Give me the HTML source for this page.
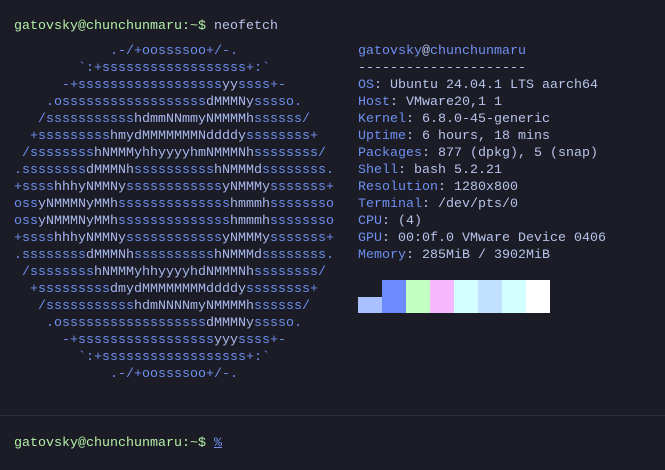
<!DOCTYPE html>
<html><head><meta charset="utf-8"><style>
html,body{margin:0;padding:0;background:#1b1c25;width:665px;height:470px;overflow:hidden}
.t{position:absolute;left:14px;font-family:"Liberation Mono",monospace;font-size:13.33px;line-height:17px;white-space:pre;color:#c0caf5}
.g{color:#b4f0a8}
.b{color:#6f8ff0}
.w{color:#a9b8f0}
.k{color:#6f8ff0}
.v{color:#b8c3ec}
.sep{position:absolute;left:0;top:415px;width:665px;height:1px;background:#2a2d3d}
.blk{position:absolute;top:280px;width:24px;height:33px}
</style></head><body>
<div class="t" style="top:18px"><span class="g">gatovsky@chunchunmaru:~$</span> <span class="v">neofetch</span></div>
<div class="t b" id="logo" style="top:43px">            .-/+oossssoo+/-.
        `:+ssssssssssssssssss+:`
      -+ssssssssssssssssssyyssss+-
    .ossssssssssssssssssdMMMNysssso.
   /ssssssssssshdmmNNmmyNMMMMhssssss/
  +ssssssssshmydMMMMMMMNddddyssssssss+
 /sssssssshNMMMyhhyyyyhmNMMMNhssssssss/
.ssssssssdMMMNhsssssssssshNMMMdssssssss.
+sssshhhyNMMNyssssssssssssyNMMMysssssss+
ossyNMMMNyMMhsssssssssssssshmmmhssssssso
ossyNMMMNyMMhsssssssssssssshmmmhssssssso
+sssshhhyNMMNyssssssssssssyNMMMysssssss+
.ssssssssdMMMNhsssssssssshNMMMdssssssss.
 /sssssssshNMMMyhhyyyyhdNMMMNhssssssss/
  +sssssssssdmydMMMMMMMMddddyssssssss+
   /ssssssssssshdmNNNNmyNMMMMhssssss/
    .ossssssssssssssssssdMMMNysssso.
      -+sssssssssssssssssyyyssss+-
        `:+ssssssssssssssssss+:`
            .-/+oossssoo+/-.</div>
<div class="t" style="top:43px;left:358px"><span class="k">gatovsky</span><span class="v">@</span><span class="k">chunchunmaru</span>
<span class="v">---------------------</span>
<span class="k">OS</span><span class="v">: Ubuntu 24.04.1 LTS aarch64</span>
<span class="k">Host</span><span class="v">: VMware20,1 1</span>
<span class="k">Kernel</span><span class="v">: 6.8.0-45-generic</span>
<span class="k">Uptime</span><span class="v">: 6 hours, 18 mins</span>
<span class="k">Packages</span><span class="v">: 877 (dpkg), 5 (snap)</span>
<span class="k">Shell</span><span class="v">: bash 5.2.21</span>
<span class="k">Resolution</span><span class="v">: 1280x800</span>
<span class="k">Terminal</span><span class="v">: /dev/pts/0</span>
<span class="k">CPU</span><span class="v">: (4)</span>
<span class="k">GPU</span><span class="v">: 00:0f.0 VMware Device 0406</span>
<span class="k">Memory</span><span class="v">: 285MiB / 3902MiB</span></div>
<div class="blk" style="left:358px;top:297px;height:16px;background:#a9c1ff"></div>
<div class="blk" style="left:382px;background:#6b8bff"></div>
<div class="blk" style="left:406px;background:#c2ffc2"></div>
<div class="blk" style="left:430px;background:#f7b8ff"></div>
<div class="blk" style="left:454px;background:#d4ffff"></div>
<div class="blk" style="left:478px;background:#c2e0ff"></div>
<div class="blk" style="left:502px;background:#d4ffff"></div>
<div class="blk" style="left:526px;background:#ffffff"></div>
<div class="sep"></div>
<div class="t" style="top:435px"><span class="g">gatovsky@chunchunmaru:~$</span> <span class="k" style="text-decoration:underline">%</span></div>
<script>
var l=document.getElementById('logo');
l.innerHTML=l.innerHTML.replace(/[hdmNMy]+/g,function(m){return '<span class="w">'+m+'</span>';});
</script>
</body></html>
